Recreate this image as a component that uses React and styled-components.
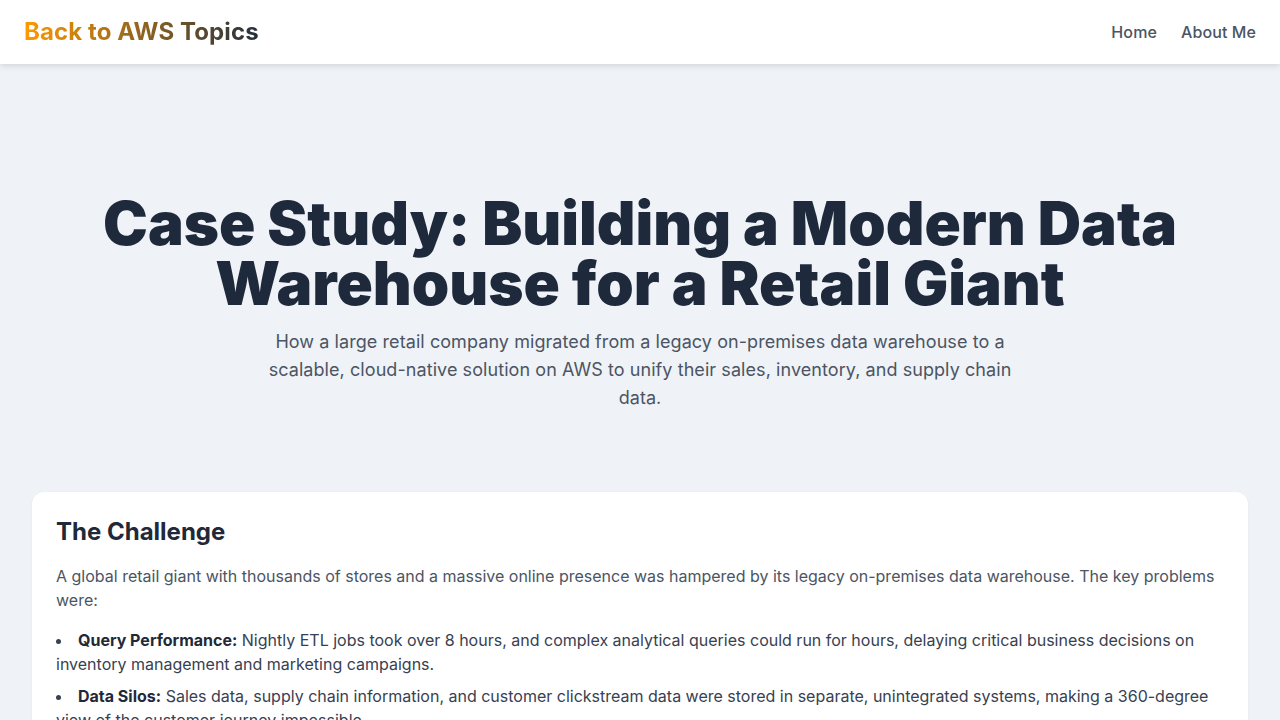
import React from 'react';
import styled, { createGlobalStyle } from 'styled-components';

const GlobalStyle = createGlobalStyle`
	* { box-sizing: border-box; }
	body {
		margin: 0;
		background: #eff2f7;
		font-family: Inter, "Noto Sans", sans-serif;
		color: #1f2937;
	}
`;

const problems = [{
	label: "Query Performance:",
	text: "Nightly ETL jobs took over 8 hours, and complex analytical queries could run for hours, delaying critical business decisions on inventory management and marketing campaigns.",
}, {
	label: "Data Silos:",
	text: "Sales data, supply chain information, and customer clickstream data were stored in separate, unintegrated systems, making a 360-degree view of the customer journey impossible.",
}, {
	label: "Scalability Limits:",
	text: "The on-premises hardware could not keep up with the growing volume of data, and every capacity upgrade required months of planning and large capital expenditure.",
}];

const App = () => {
	return (
		<>
			<GlobalStyle />
			<Header>
				<Logo href="#">Back to AWS Topics</Logo>
				<Nav>
					<a href="#">Home</a>
					<a href="#">About Me</a>
				</Nav>
			</Header>

			<Main>
				<Hero>
					<Title>Case Study: Building a Modern Data Warehouse for a Retail Giant</Title>
					<Subtitle>
						How a large retail company migrated from a legacy on-premises data warehouse to a scalable, cloud-native solution on AWS to unify their sales, inventory, and supply chain data.
					</Subtitle>
				</Hero>

				<Card>
					<CardTitle>The Challenge</CardTitle>
					<CardText>
						A global retail giant with thousands of stores and a massive online presence was hampered by its legacy on-premises data warehouse. The key problems were:
					</CardText>
					<List>
						{problems.map((p, i) => (
							<li key={i}><strong>{p.label}</strong> {p.text}</li>
						))}
					</List>
				</Card>
			</Main>
		</>
	);
};

export default App;

const Header = styled.header`
	height: 64px;
	background: #ffffff;
	box-shadow: 0 2px 6px rgba(0, 0, 0, 0.12);
	padding: 0 24px;
	display: flex;
	align-items: center;
	justify-content: space-between;
	position: relative;
	z-index: 1;
`;

const Logo = styled.a`
	font-size: 24px;
	font-weight: 700;
	line-height: 32px;
	letter-spacing: 0.1px;
	text-decoration: none;
	background: linear-gradient(90deg, #ff9900 0%, #232f3e 100%);
	-webkit-background-clip: text;
	background-clip: text;
	color: transparent;
`;

const Nav = styled.nav`
	display: flex;
	gap: 24px;

	a {
		color: #4b5563;
		font-size: 16px;
		font-weight: 500;
		letter-spacing: 0.1px;
		text-decoration: none;
	}
`;

const Main = styled.main`
	max-width: 1280px;
	margin: 0 auto;
	padding: 0 32px 48px;
`;

const Hero = styled.section`
	text-align: center;
	padding: 129px 0 80px;
`;

const Title = styled.h1`
	margin: 0 auto;
	max-width: 1120px;
	font-size: 60px;
	line-height: 60px;
	font-weight: 900;
	color: #1e293b;
`;

const Subtitle = styled.p`
	margin: 15px auto 0;
	max-width: 768px;
	font-size: 18px;
	line-height: 28px;
	letter-spacing: 0.07px;
	color: #4b5563;
`;

const Card = styled.section`
	background: #ffffff;
	border-radius: 12px;
	box-shadow: 0 1px 3px rgba(0, 0, 0, 0.06);
	padding: 24px;
`;

const CardTitle = styled.h2`
	margin: 0 0 16px;
	font-size: 24px;
	line-height: 32px;
	font-weight: 700;
	color: #1f2937;
`;

const CardText = styled.p`
	margin: 0 0 16px;
	font-size: 16px;
	line-height: 24px;
	color: #4b5563;
`;

const List = styled.ul`
	margin: 0;
	padding: 0;
	list-style: disc inside;
	display: flex;
	flex-direction: column;
	gap: 8px;

	li {
		font-size: 16px;
		line-height: 24px;
		color: #374151;
	}

	strong {
		color: #1f2937;
		font-weight: 700;
	}
`;
